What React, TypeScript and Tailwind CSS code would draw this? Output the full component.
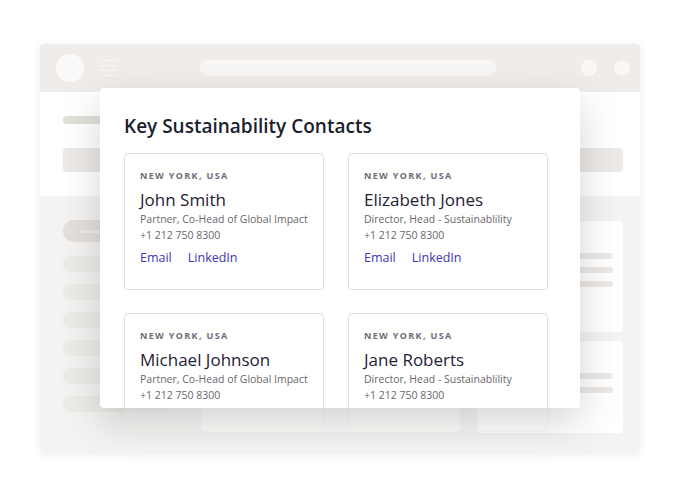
import React from "react";

type Contact = { name: string; title: string; links: boolean };

const contacts: Contact[] = [
  { name: "John Smith", title: "Partner, Co-Head of Global Impact", links: true },
  { name: "Elizabeth Jones", title: "Director, Head - Sustainablility", links: true },
  { name: "Michael Johnson", title: "Partner, Co-Head of Global Impact", links: false },
  { name: "Jane Roberts", title: "Director, Head - Sustainablility", links: false },
];

function ContactCard({ c }: { c: Contact }) {
  return (
    <div className="w-[200px] h-[137px] shrink-0 rounded-[4px] border border-[#e3ded8] bg-white pl-[15px] pt-[16px]">
      <div className="text-[9px] leading-[12px] font-bold tracking-[0.15em] text-[#6c6c76] uppercase">
        New York, USA
      </div>
      <div className="mt-[7px] text-[17px] leading-[22px] font-medium text-[#1f2233]">{c.name}</div>
      <div className="text-[10.5px] leading-[16px] text-[#67676b]">{c.title}</div>
      <div className="text-[10.5px] leading-[16px] text-[#67676b]">+1 212 750 8300</div>
      {c.links && (
        <div className="mt-[6px] flex gap-[16px] text-[12.5px] leading-[18px] text-[#3d36b4]">
          <span>Email</span>
          <span>LinkedIn</span>
        </div>
      )}
    </div>
  );
}

export default function App() {
  return (
    <div
      className="relative w-[680px] h-[496px] overflow-hidden bg-white pt-[44px] pl-[40px]"
      style={{ fontFamily: '"Open Sans", "Noto Sans", sans-serif' }}
    >
      {/* Browser window */}
      <div className="flex h-[408px] w-[600px] flex-col overflow-hidden rounded-[4px] shadow-[0_2px_10px_rgba(0,0,0,0.08)]">
        {/* Header */}
        <div className="flex h-[48px] shrink-0 items-center bg-[#efecea] pl-[16px] pr-[10px]">
          <div className="h-[28px] w-[28px] rounded-full bg-[#faf9f8]" />
          <div className="ml-[16px] flex w-[17px] flex-col gap-[4px]">
            <div className="h-[1px] bg-[#f8f7f6]" />
            <div className="h-[1px] bg-[#f8f7f6]" />
            <div className="h-[1px] bg-[#f8f7f6]" />
            <div className="h-[1px] bg-[#f8f7f6]" />
          </div>
          <div className="ml-[83px] h-[16px] w-[296px] rounded-full bg-[#f8f7f6]" />
          <div className="ml-auto flex gap-[17px]">
            <div className="h-[16px] w-[16px] rounded-full bg-[#f9f8f7]" />
            <div className="h-[16px] w-[16px] rounded-full bg-[#f9f8f7]" />
          </div>
        </div>

        {/* Upper white section */}
        <div className="h-[104px] shrink-0 bg-white pl-[23px] pr-[17px] pt-[24px]">
          <div className="h-[8px] w-[140px] rounded-full bg-[#e2dfdb]" />
          <div className="mt-[24px] h-[24px] rounded-[4px] bg-[#ece9e6]" />
        </div>

        {/* Lower grey section */}
        <div className="flex flex-1 gap-[16px] bg-[#f4f3f1] pl-[23px] pr-[17px] pt-[24px]">
          {/* Sidebar */}
          <div className="flex w-[122px] shrink-0 flex-col">
            <div className="flex h-[22px] items-center rounded-full bg-[#e3e0dc] pl-[17px]">
              <div className="h-[3px] w-[60px] rounded-full bg-[#efedea]" />
            </div>
            <div className="mt-[14px] flex flex-col gap-[12px]">
              {[0, 1, 2, 3, 4, 5].map((i) => (
                <div key={i} className="h-[16px] w-[110px] rounded-full bg-[#ecebe8]" />
              ))}
            </div>
          </div>

          {/* Middle column */}
          <div className="flex w-[259px] shrink-0 flex-col pt-[1px]">
            <div className="h-[211px] rounded-[4px] bg-[#fbfbfa]" />
          </div>

          {/* Right column */}
          <div className="ml-[1px] flex w-[146px] shrink-0 flex-col gap-[9px] pt-[1px]">
            <div className="flex h-[111px] flex-col gap-[8px] rounded-[4px] bg-white pl-[16px] pr-[10px] pt-[32px]">
              <div className="h-[6px] rounded-full bg-[#ebe8e5]" />
              <div className="h-[6px] rounded-full bg-[#ebe8e5]" />
              <div className="h-[6px] rounded-full bg-[#ebe8e5]" />
            </div>
            <div className="flex h-[92px] flex-col gap-[8px] rounded-[4px] bg-white pl-[16px] pr-[10px] pt-[32px]">
              <div className="h-[6px] rounded-full bg-[#ebe8e5]" />
              <div className="h-[6px] rounded-full bg-[#ebe8e5]" />
            </div>
          </div>
        </div>
      </div>

      {/* Modal */}
      <div className="absolute left-[100px] top-[88px] w-[480px] h-[320px]">
        <div className="absolute left-[24px] top-full flex gap-[24px]">
          <div className="h-[24px] w-[200px] rounded-b-[4px] border-x border-b border-[#e3ded8]/20 bg-white/30" />
          <div className="h-[24px] w-[200px] rounded-b-[4px] border-x border-b border-[#e3ded8]/20 bg-white/30" />
        </div>
        <div className="relative h-full w-full overflow-hidden rounded-[4px] bg-white pl-[24px] pt-[25px] shadow-[0_14px_40px_rgba(0,0,0,0.17)]">
          <h1 className="text-[19px] leading-[26px] font-semibold text-[#1b1e2d]">
            Key Sustainability Contacts
          </h1>
          <div className="mt-[14px] grid grid-cols-[200px_200px] gap-x-[24px] gap-y-[23px]">
            {contacts.map((c) => (
              <ContactCard key={c.name} c={c} />
            ))}
          </div>
        </div>
      </div>
    </div>
  );
}
